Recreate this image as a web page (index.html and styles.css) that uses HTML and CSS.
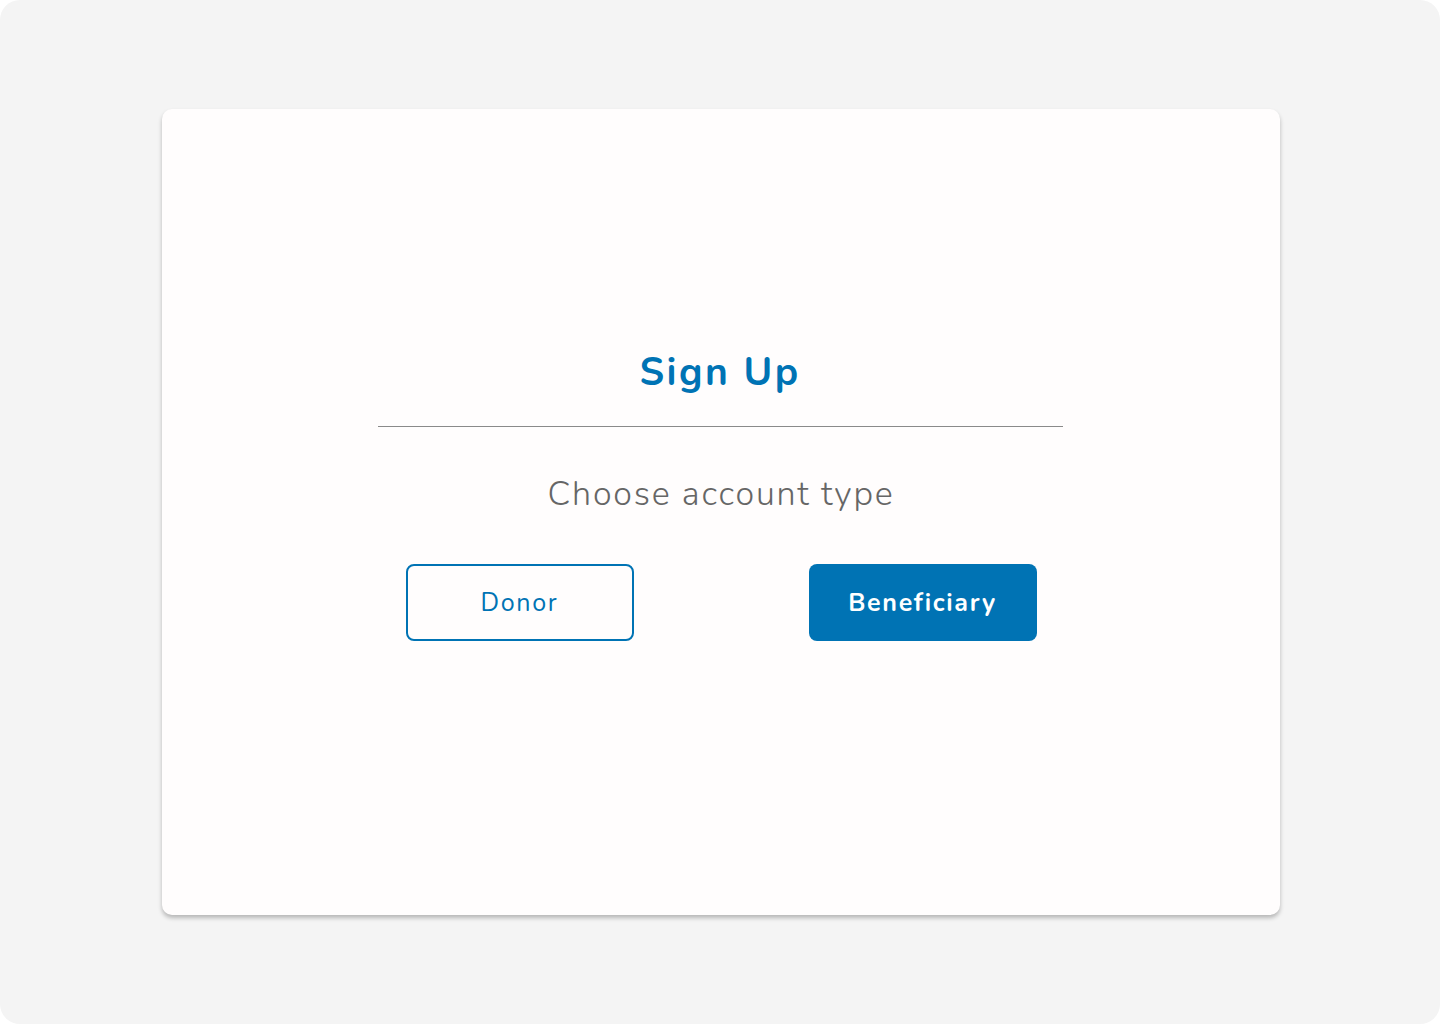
FILE: index.html
```html
<!DOCTYPE html>
<html lang="en">
<head>
<meta charset="utf-8">
<title>Sign Up</title>
<link rel="stylesheet" href="styles.css">
</head>
<body>
<div class="page">
  <main class="card">
    <h1 class="title">Sign Up</h1>
    <hr class="divider">
    <p class="subtitle">Choose account type</p>
    <div class="actions">
      <button class="btn btn-outline" type="button">Donor</button>
      <button class="btn btn-solid" type="button">Beneficiary</button>
    </div>
  </main>
</div>
</body>
</html>
```

FILE: styles.css
```css
html, body {
  margin: 0;
  padding: 0;
  background: #ffffff;
}
body {
  font-family: "Nunito", "Lato", "Open Sans", sans-serif;
}
.page {
  width: 1440px;
  height: 1024px;
  background: #f4f4f4;
  border-radius: 20px;
  box-sizing: border-box;
  padding: 109px 160px 0 162px;
}
.card {
  width: 1118px;
  height: 806px;
  box-sizing: border-box;
  background: #fffdfd;
  border-radius: 10px;
  box-shadow: 0 3px 4px rgba(0, 0, 0, 0.25);
  display: flex;
  flex-direction: column;
  align-items: center;
  padding-top: 240px;
}
.title {
  margin: 0 0 0 -2px;
  font-size: 39px;
  line-height: 48px;
  font-weight: 700;
  color: #0073b4;
  letter-spacing: 2.5px;
}
.divider {
  width: 685px;
  margin: 29px 0 0 -2px;
  border: 0;
  height: 1px;
  background: #8a8a8a;
}
.subtitle {
  margin: 47px 0 0 0;
  font-size: 34px;
  line-height: 40px;
  font-weight: 300;
  color: #666666;
  letter-spacing: 1.8px;
}
.actions {
  margin-top: 50px;
  display: flex;
  gap: 175px;
}
.btn {
  width: 228px;
  height: 77px;
  box-sizing: border-box;
  border-radius: 8px;
  font-family: inherit;
  font-size: 25px;
  letter-spacing: 1.7px;
  cursor: pointer;
}
.btn-outline {
  background: transparent;
  border: 2px solid #0073b4;
  color: #0073b4;
  font-weight: 400;
}
.btn-solid {
  background: #0073b4;
  border: 0;
  color: #ffffff;
  font-weight: 700;
}
```
